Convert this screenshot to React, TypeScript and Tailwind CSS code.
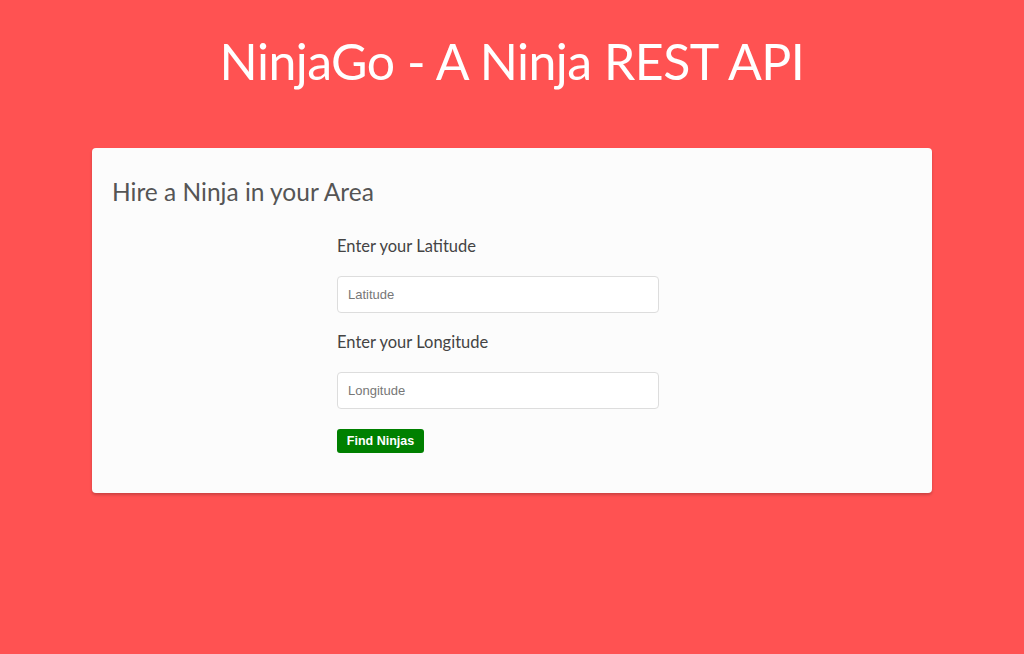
export default function App() {
  const labelFont = { fontFamily: 'Lato, "Open Sans", sans-serif' };
  return (
    <div className="min-h-[654px] w-full bg-[#ff5252] pt-[28px]" style={labelFont}>
      <h1 className="text-center text-[50px] leading-[66px] text-white font-normal tracking-[-0.5px]">
        NinjaGo - A Ninja REST API
      </h1>

      <div className="mx-auto mt-[54px] w-[840px] h-[345px] rounded-[4px] bg-[#fcfcfc] px-[20px] pt-[28px] shadow-[0_2px_3px_rgba(0,0,0,0.2)]">
        <h2 className="text-[24.5px] leading-[32px] text-[#555]">Hire a Ninja in your Area</h2>

        <div className="ml-[225px] mt-[26px] w-[322px]">
          <label className="block text-[16.5px] leading-[24px] text-[#444]">Enter your Latitude</label>
          <input
            placeholder="Latitude"
            className="mt-[18px] block h-[37px] w-full rounded-[4px] border border-[#ddd] bg-white px-[10px] text-[13px] outline-none placeholder:text-[#777] font-['Liberation_Sans',Arial,sans-serif]"
          />
          <label className="mt-[17px] block text-[16.5px] leading-[24px] text-[#444]">Enter your Longitude</label>
          <input
            placeholder="Longitude"
            className="mt-[18px] block h-[37px] w-full rounded-[4px] border border-[#ddd] bg-white px-[10px] text-[13px] outline-none placeholder:text-[#777] font-['Liberation_Sans',Arial,sans-serif]"
          />
          <button className="mt-[20px] h-[24px] w-[87px] rounded-[3px] bg-[#008000] text-[12.5px] font-bold text-white font-['Liberation_Sans',Arial,sans-serif]">
            Find Ninjas
          </button>
        </div>
      </div>
    </div>
  );
}
